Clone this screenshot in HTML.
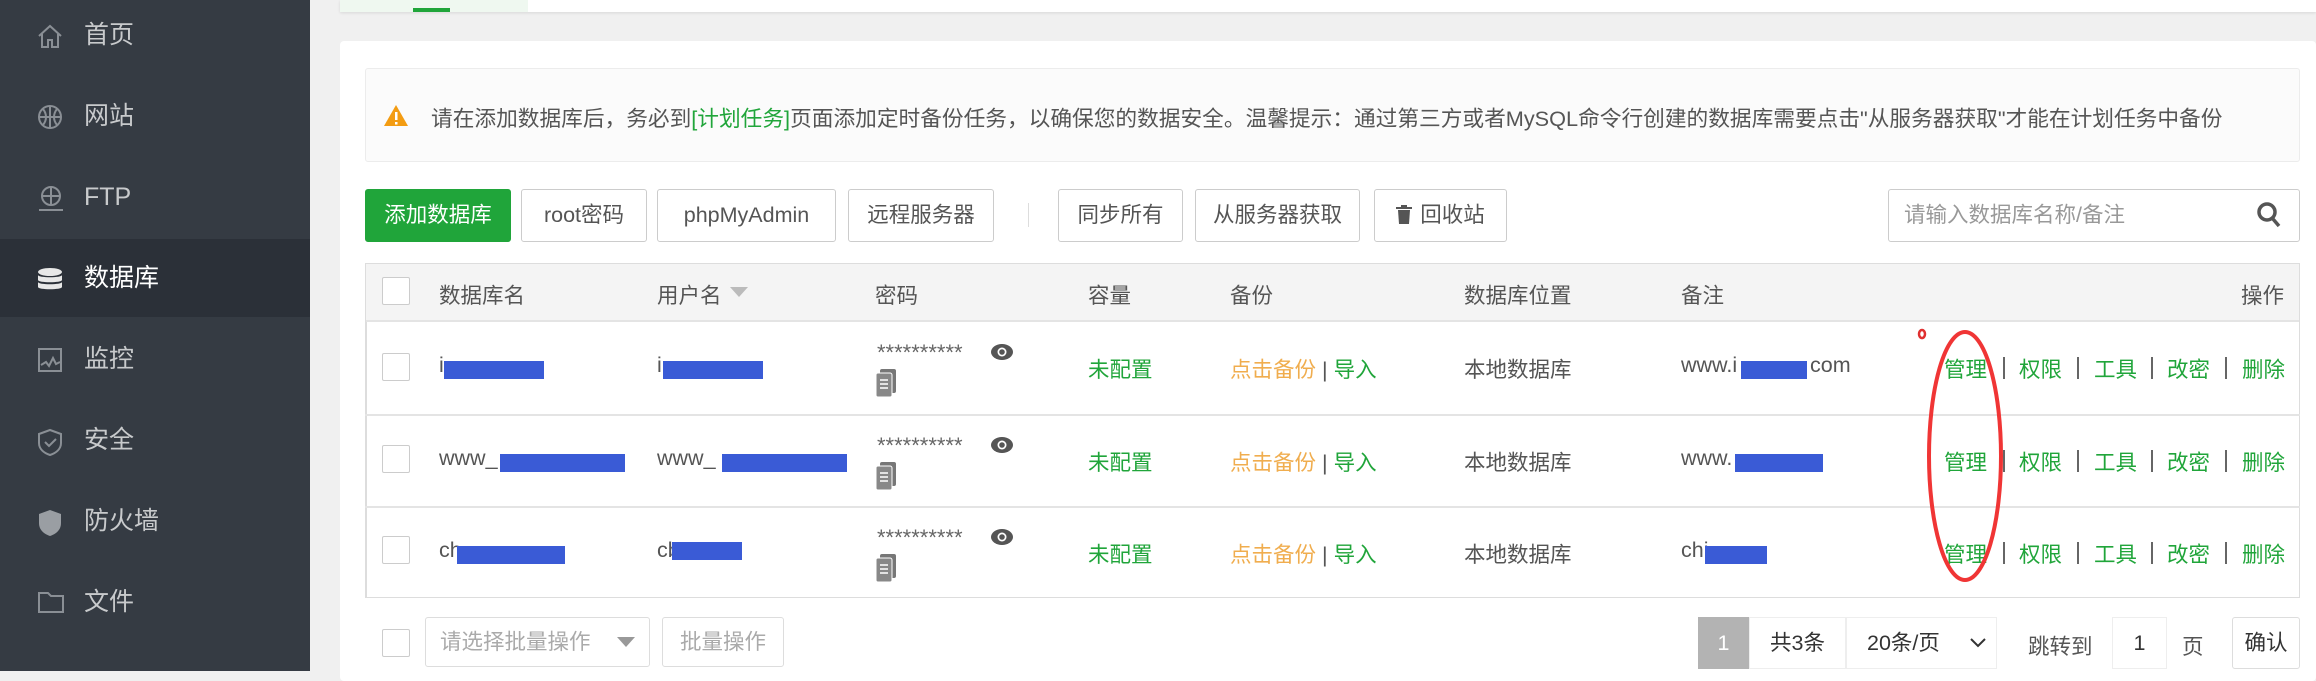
<!DOCTYPE html>
<html><head><meta charset="utf-8"><style>
*{margin:0;padding:0;box-sizing:border-box}
body{width:2316px;height:671px;overflow:hidden;background:#f0f0f0;font-family:"Liberation Sans","Noto Sans CJK SC",sans-serif;font-size:21.5px;color:#555;position:relative}
.a{position:absolute;white-space:nowrap}
#side{position:absolute;left:0;top:0;width:310px;height:671px;background:#353b43}
.mi{position:absolute;left:0;width:310px;height:81px;color:#c8cacc;font-size:25px;line-height:81px;padding-left:84px}
.mi svg{position:absolute;left:37px;top:28px}
.btn{position:absolute;top:189px;height:53px;border:1px solid #ccc;border-radius:3px;background:#fff;color:#555;font-size:21.5px;line-height:51px;text-align:center}
.cb{position:absolute;width:28px;height:28px;border:1px solid #ccc;border-radius:2px;background:#fff}
.g{color:#20a53a}.o{color:#f0ad4e}
.blue{position:absolute;background:#3a5bd6;height:18px}
.row{position:absolute;left:365px;width:1935px;height:1px;background:#e4e4e4}
.pw{position:absolute;left:877px;font-size:22px;color:#666}
.s{position:absolute;width:2px;height:22px;background:#666}
</style></head><body>
<div id="side">
 <div class="mi" style="top:-5px"><svg width="26" height="26" viewBox="0 0 26 26" fill="none" stroke="#8a8f95" stroke-width="2"><path d="M2 13L13 3l11 10M5 11v13h6v-7h4v7h6V11"/></svg>首页</div>
 <div class="mi" style="top:76px"><svg width="26" height="26" viewBox="0 0 26 26" fill="none" stroke="#8a8f95" stroke-width="2"><circle cx="13" cy="13" r="11"/><path d="M2 13h22M13 2v22M6 5c4 5 4 11 0 16M20 5c-4 5-4 11 0 16"/></svg>网站</div>
 <div class="mi" style="top:157px"><svg width="28" height="28" viewBox="0 0 28 28" fill="none" stroke="#8a8f95" stroke-width="2"><circle cx="14" cy="11" r="9"/><path d="M5 11h18M14 2v18M2 25h24"/></svg>FTP</div>
 <div class="mi" style="top:239px;height:78px;line-height:78px;background:#2b3038;color:#fff"><svg width="26" height="28" viewBox="0 0 26 28" fill="#e8e8e8"><ellipse cx="13" cy="5" rx="12" ry="4"/><path d="M1 8c0 3 24 3 24 0v5c0 3-24 3-24 0zM1 15c0 3 24 3 24 0v5c0 3-24 3-24 0z"/></svg>数据库</div>
 <div class="mi" style="top:319px"><svg width="26" height="26" viewBox="0 0 26 26" fill="none" stroke="#8a8f95" stroke-width="2"><rect x="2" y="2" width="22" height="22"/><path d="M4 18l5-3 3 4 4-8 3 6 4-2"/></svg>监控</div>
 <div class="mi" style="top:400px"><svg width="26" height="28" viewBox="0 0 26 28" fill="none" stroke="#8a8f95" stroke-width="2"><path d="M13 2l11 4v9c0 6-5 10-11 12C7 25 2 21 2 15V6z"/><path d="M8 14l4 4 7-7"/></svg>安全</div>
 <div class="mi" style="top:481px"><svg width="26" height="28" viewBox="0 0 26 28" fill="#9a9ea3"><path d="M13 1l11 4v9c0 7-5 11-11 13C7 25 2 21 2 14V5z"/></svg>防火墙</div>
 <div class="mi" style="top:562px"><svg width="28" height="24" viewBox="0 0 28 24" fill="none" stroke="#8a8f95" stroke-width="2"><path d="M2 3h9l3 3h12v16H2z"/></svg>文件</div>
</div>
<div class="a" style="left:340px;top:0;width:1976px;height:12px;background:#fff;box-shadow:0 1px 3px rgba(0,0,0,.1)"></div>
<div class="a" style="left:340px;top:0;width:188px;height:12px;background:#eff8f0"></div>
<div class="a" style="left:413px;top:8px;width:37px;height:4px;background:#20a53a"></div>
<div class="a" style="left:340px;top:41px;width:1976px;height:640px;background:#fff;border-radius:4px"></div>
<div class="a" style="left:365px;top:68px;width:1935px;height:94px;background:#fbfbfb;border:1px solid #ececec;border-radius:3px"></div>
<svg class="a" style="left:383px;top:104px" width="26" height="23" viewBox="0 0 26 23"><path d="M13 1L25 22H1z" fill="#f39c12"/><rect x="12" y="8" width="2.5" height="8" fill="#fff"/><rect x="12" y="18" width="2.5" height="2.5" fill="#fff"/></svg>
<div class="a" style="left:431px;top:102px;font-size:21.7px;color:#555">请在添加数据库后，务必到<span class="g">[计划任务]</span>页面添加定时备份任务，以确保您的数据安全。温馨提示：通过第三方或者MySQL命令行创建的数据库需要点击"从服务器获取"才能在计划任务中备份</div>
<div class="btn" style="left:365px;width:146px;background:#20a53a;border-color:#20a53a;color:#fff">添加数据库</div>
<div class="btn" style="left:521px;width:126px">root密码</div>
<div class="btn" style="left:657px;width:179px">phpMyAdmin</div>
<div class="btn" style="left:848px;width:146px">远程服务器</div>
<div class="a" style="left:1028px;top:203px;width:1px;height:24px;background:#ddd"></div>
<div class="btn" style="left:1058px;width:125px">同步所有</div>
<div class="btn" style="left:1195px;width:165px">从服务器获取</div>
<div class="btn" style="left:1374px;width:133px"><svg width="16" height="19" viewBox="0 0 16 19" style="vertical-align:-2px;margin-right:8px"><rect x="0" y="2" width="16" height="2" fill="#555"/><rect x="5" y="0" width="6" height="3" fill="#555"/><path d="M2 5h12l-1 14H3z" fill="#555"/></svg>回收站</div>
<div class="a" style="left:1888px;top:189px;width:412px;height:53px;border:1px solid #ccc;border-radius:3px;background:#fff;padding-left:15px;line-height:51px;color:#999">请输入数据库名称/备注</div>
<svg class="a" style="left:2256px;top:201px" width="26" height="28" viewBox="0 0 26 28" fill="none" stroke="#555" stroke-width="3.5"><circle cx="11" cy="11" r="8"/><path d="M17 18l6 7"/></svg>
<div class="a" style="left:365px;top:263px;width:1935px;height:335px;border:1px solid #ddd;border-left:2px solid #ddd"></div>
<div class="a" style="left:366px;top:264px;width:1933px;height:58px;background:#f4f4f4;border-bottom:2px solid #e4e4e4"></div>
<div class="row" style="top:414px;height:2px"></div>
<div class="row" style="top:506px;height:2px"></div>
<div class="cb" style="left:382px;top:277px"></div>
<div class="a" style="left:439px;top:279px">数据库名</div>
<div class="a" style="left:657px;top:279px">用户名</div>
<svg class="a" style="left:730px;top:287px" width="18" height="10"><path d="M0 0h18L9 10z" fill="#bbb"/></svg>
<div class="a" style="left:875px;top:279px">密码</div>
<div class="a" style="left:1088px;top:279px">容量</div>
<div class="a" style="left:1230px;top:279px">备份</div>
<div class="a" style="left:1464px;top:279px">数据库位置</div>
<div class="a" style="left:1681px;top:279px">备注</div>
<div class="a" style="left:2241px;top:279px">操作</div>

<div class="cb" style="left:382px;top:353px"></div>
<div class="cb" style="left:382px;top:445px"></div>
<div class="cb" style="left:382px;top:536px"></div>

<div class="a" style="left:439px;top:353px">i</div><div class="blue" style="left:444px;top:361px;width:100px"></div>
<div class="a" style="left:657px;top:353px">i</div><div class="blue" style="left:663px;top:361px;width:100px"></div>
<div class="a" style="left:439px;top:446px">www_</div><div class="blue" style="left:500px;top:454px;width:125px"></div>
<div class="a" style="left:657px;top:446px">www_</div><div class="blue" style="left:722px;top:454px;width:125px"></div>
<div class="a" style="left:439px;top:538px">ch</div><div class="blue" style="left:457px;top:546px;width:108px"></div>
<div class="a" style="left:657px;top:538px">cb</div><div class="blue" style="left:672px;top:542px;width:70px"></div>

<div class="a" style="left:1088px;top:353px"><span class="g">未配置</span></div>
<div class="a" style="left:1088px;top:446px"><span class="g">未配置</span></div>
<div class="a" style="left:1088px;top:538px"><span class="g">未配置</span></div>
<div class="a" style="left:1230px;top:353px"><span class="o">点击备份</span> | <span class="g">导入</span></div>
<div class="a" style="left:1230px;top:446px"><span class="o">点击备份</span> | <span class="g">导入</span></div>
<div class="a" style="left:1230px;top:538px"><span class="o">点击备份</span> | <span class="g">导入</span></div>
<div class="a" style="left:1464px;top:353px">本地数据库</div>
<div class="a" style="left:1464px;top:446px">本地数据库</div>
<div class="a" style="left:1464px;top:538px">本地数据库</div>
<div class="a" style="left:1681px;top:353px">www.i</div><div class="blue" style="left:1741px;top:361px;width:66px"></div><div class="a" style="left:1810px;top:353px">com</div>
<div class="a" style="left:1681px;top:446px">www.</div><div class="blue" style="left:1735px;top:454px;width:88px"></div>
<div class="a" style="left:1681px;top:538px">chi</div><div class="blue" style="left:1705px;top:546px;width:62px"></div>

<div class="a g" style="left:1944px;top:353px">管理</div><div class="s" style="left:2003px;top:357px"></div><div class="a g" style="left:2019px;top:353px">权限</div><div class="s" style="left:2077px;top:357px"></div><div class="a g" style="left:2094px;top:353px">工具</div><div class="s" style="left:2151px;top:357px"></div><div class="a g" style="left:2167px;top:353px">改密</div><div class="s" style="left:2225px;top:357px"></div><div class="a g" style="left:2242px;top:353px">删除</div>
<div class="a g" style="left:1944px;top:446px">管理</div><div class="s" style="left:2003px;top:450px"></div><div class="a g" style="left:2019px;top:446px">权限</div><div class="s" style="left:2077px;top:450px"></div><div class="a g" style="left:2094px;top:446px">工具</div><div class="s" style="left:2151px;top:450px"></div><div class="a g" style="left:2167px;top:446px">改密</div><div class="s" style="left:2225px;top:450px"></div><div class="a g" style="left:2242px;top:446px">删除</div>
<div class="a g" style="left:1944px;top:538px">管理</div><div class="s" style="left:2003px;top:542px"></div><div class="a g" style="left:2019px;top:538px">权限</div><div class="s" style="left:2077px;top:542px"></div><div class="a g" style="left:2094px;top:538px">工具</div><div class="s" style="left:2151px;top:542px"></div><div class="a g" style="left:2167px;top:538px">改密</div><div class="s" style="left:2225px;top:542px"></div><div class="a g" style="left:2242px;top:538px">删除</div>

<div class="pw" style="top:340px">**********</div>
<div class="pw" style="top:433px">**********</div>
<div class="pw" style="top:525px">**********</div>
<svg class="a" style="left:990px;top:343px" width="24" height="18"><ellipse cx="12" cy="9" rx="11" ry="8" fill="#555"/><circle cx="12" cy="9" r="4.5" fill="#fff"/><circle cx="12" cy="9" r="2.8" fill="#555"/></svg>
<svg class="a" style="left:990px;top:436px" width="24" height="18"><ellipse cx="12" cy="9" rx="11" ry="8" fill="#555"/><circle cx="12" cy="9" r="4.5" fill="#fff"/><circle cx="12" cy="9" r="2.8" fill="#555"/></svg>
<svg class="a" style="left:990px;top:528px" width="24" height="18"><ellipse cx="12" cy="9" rx="11" ry="8" fill="#555"/><circle cx="12" cy="9" r="4.5" fill="#fff"/><circle cx="12" cy="9" r="2.8" fill="#555"/></svg>
<svg class="a" style="left:875px;top:369px" width="22" height="28"><rect x="5" y="0" width="16" height="24" rx="2" fill="#777"/><rect x="1" y="4" width="16" height="24" rx="2" fill="#888" stroke="#fff"/><path d="M5 11h8M5 15h8M5 19h8" stroke="#fff" stroke-width="1.5"/></svg>
<svg class="a" style="left:875px;top:462px" width="22" height="28"><rect x="5" y="0" width="16" height="24" rx="2" fill="#777"/><rect x="1" y="4" width="16" height="24" rx="2" fill="#888" stroke="#fff"/><path d="M5 11h8M5 15h8M5 19h8" stroke="#fff" stroke-width="1.5"/></svg>
<svg class="a" style="left:875px;top:554px" width="22" height="28"><rect x="5" y="0" width="16" height="24" rx="2" fill="#777"/><rect x="1" y="4" width="16" height="24" rx="2" fill="#888" stroke="#fff"/><path d="M5 11h8M5 15h8M5 19h8" stroke="#fff" stroke-width="1.5"/></svg>

<svg class="a" style="left:1900px;top:320px" width="120" height="290"><ellipse cx="65" cy="136" rx="36" ry="124" fill="none" stroke="#f03535" stroke-width="4"/><ellipse cx="22" cy="14" rx="3" ry="4" fill="none" stroke="#e03030" stroke-width="2.5"/></svg>

<div class="cb" style="left:382px;top:629px"></div>
<div class="a" style="left:425px;top:617px;width:225px;height:50px;border:1px solid #ddd;border-radius:3px;line-height:48px;padding-left:14px;color:#aaa">请选择批量操作</div>
<svg class="a" style="left:617px;top:637px" width="18" height="10"><path d="M0 0h18L9 10z" fill="#999"/></svg>
<div class="a" style="left:662px;top:617px;width:122px;height:50px;border:1px solid #ddd;border-radius:3px;line-height:48px;text-align:center;color:#aaa">批量操作</div>
<div class="a" style="left:1698px;top:617px;width:51px;height:52px;background:#b3b3b3;color:#fff;line-height:52px;text-align:center">1</div>
<div class="a" style="left:1749px;top:617px;width:97px;height:52px;border:1px solid #eee;line-height:50px;text-align:center;color:#333">共3条</div>
<div class="a" style="left:1846px;top:617px;width:151px;height:52px;border:1px solid #eee;line-height:50px;padding-left:20px;color:#333">20条/页</div>
<svg class="a" style="left:1970px;top:638px" width="16" height="10"><path d="M1 1l7 7 7-7" fill="none" stroke="#333" stroke-width="2"/></svg>
<div class="a" style="left:2028px;top:630px;color:#555">跳转到</div>
<div class="a" style="left:2112px;top:617px;width:55px;height:52px;border:1px solid #eee;line-height:50px;text-align:center;color:#333">1</div>
<div class="a" style="left:2182px;top:630px;color:#555">页</div>
<div class="a" style="left:2232px;top:617px;width:68px;height:52px;border:1px solid #ddd;border-radius:3px;line-height:50px;text-align:center;color:#333">确认</div>
</body></html>
